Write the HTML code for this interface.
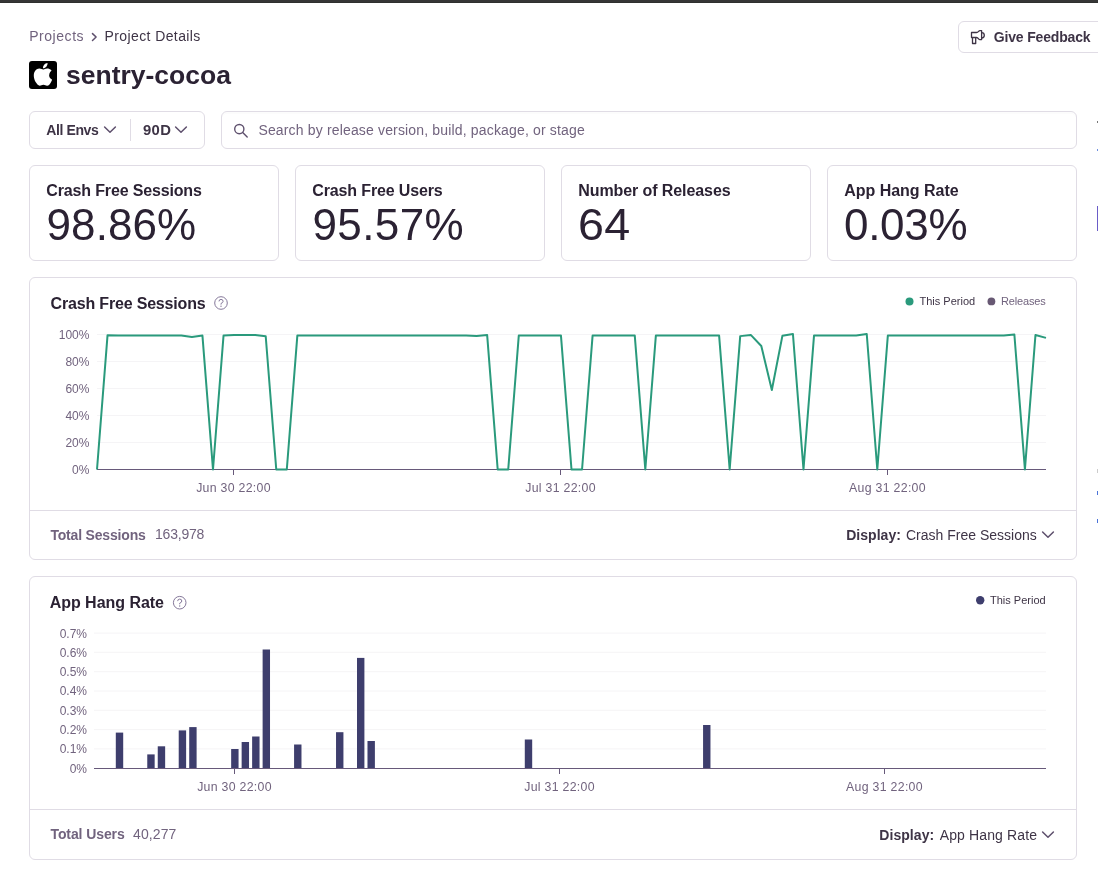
<!DOCTYPE html>
<html><head><meta charset="utf-8"><style>
html,body{margin:0;padding:0;background:#fff;width:1098px;height:880px;overflow:hidden;position:relative;font-family:"Liberation Sans", sans-serif;}
.t{position:absolute;white-space:nowrap;font-family:"Liberation Sans", sans-serif;-webkit-font-smoothing:antialiased;}
body{will-change:transform;}
.b{position:absolute;box-sizing:border-box;}
svg{position:absolute;left:0;top:0;overflow:visible}
</style></head><body>
<div class="b" style="left:0px;top:0px;width:1098px;height:2px;background:#363636;"></div>
<div class="b" style="left:0px;top:2px;width:1098px;height:1px;background:#2f302f;"></div>
<div class="t" style="left:29.20px;top:29.15px;font-size:14px;line-height:14px;color:#71637e;font-weight:400;letter-spacing:0.55px;">Projects</div>
<svg width="1098" height="880" style="pointer-events:none"><path d="M92.5 33.6 L96.1 37.05 L92.5 40.5" fill="none" stroke="#5e506d" stroke-width="1.5" stroke-linecap="round" stroke-linejoin="round"/></svg>
<div class="t" style="left:104.60px;top:29.15px;font-size:14px;line-height:14px;color:#3e3446;font-weight:400;letter-spacing:0.39px;">Project Details</div>
<div class="b" style="left:29px;top:61px;width:28px;height:28px;background:#000;border-radius:3px;"></div>
<svg width="1098" height="880"><g transform="translate(25.13,58.21) scale(0.03054)">
<path fill="#fff" d="M788 553c-1-94 77-139 80-141-44-64-112-73-136-74-58-6-113 34-142 34-29 0-74-33-122-32-63 1-121 37-153 93-65 113-17 281 47 373 31 45 68 96 116 94 47-2 64-30 121-30 56 0 72 30 121 29 50-1 82-46 112-91 35-52 50-102 51-105-1 0-97-37-98-150zM695 277c26-31 43-74 38-117-37 2-82 25-108 55-24 27-45 71-39 113 41 3 83-21 109-51z"/>
</g></svg>
<div class="t" style="left:66.00px;top:61.57px;font-size:26.5px;line-height:26.5px;color:#2b2233;font-weight:700;letter-spacing:0px;">sentry-cocoa</div>
<div class="b" style="left:958px;top:21px;width:160px;height:32px;border:1px solid #e0dce5;border-radius:6px;"></div>
<svg width="1098" height="880"><g fill="none" stroke="#3e3446" stroke-width="1.3" stroke-linejoin="round">
<path d="M971.5 32.5 H976.5 Q977.6 32.5 978.6 31.3 Q979.2 30.6 980 30.6 H981.6 V39.6 H980 Q979.2 39.6 978.6 38.8 Q977.6 37.5 976.5 37.5 H971.5 Z"/>
<path d="M981.6 32.6 A2.7 2.7 0 0 1 981.6 38"/>
<path d="M972.5 37.5 V43.5 H975.7 V37.5"/>
</g></svg>
<div class="t" style="left:993.80px;top:30.25px;font-size:14px;line-height:14px;color:#3e3446;font-weight:700;letter-spacing:-0.17px;">Give Feedback</div>
<div class="b" style="left:29px;top:111px;width:176px;height:38px;border:1px solid #e0dce5;border-radius:6px;"></div>
<div class="b" style="left:130px;top:119px;width:1px;height:22px;background:#e0dce5;"></div>
<div class="t" style="left:46.30px;top:123.15px;font-size:14px;line-height:14px;color:#3e3446;font-weight:700;letter-spacing:-0.4px;">All Envs</div>
<div class="t" style="left:143.00px;top:123.15px;font-size:14px;line-height:14px;color:#3e3446;font-weight:700;letter-spacing:0.3px;transform:scaleX(1.06);transform-origin:0 0;">90D</div>
<svg width="1098" height="880"><g fill="none" stroke="#5e506d" stroke-width="1.5" stroke-linecap="round" stroke-linejoin="round">
<path d="M104.6 127 L110 132.3 L115.4 127"/>
<path d="M175.6 127 L181 132.3 L186.4 127"/>
</g></svg>
<div class="b" style="left:221px;top:111px;width:856px;height:38px;border:1px solid #e0dce5;border-radius:6px;box-shadow:inset 0 2px 0 rgba(0,0,0,0.012);"></div>
<svg width="1098" height="880"><g fill="none" stroke="#5e506d" stroke-width="1.4" stroke-linecap="round">
<circle cx="239.3" cy="129.1" r="4.6"/><path d="M242.7 132.5 L247.2 137"/>
</g></svg>
<div class="t" style="left:258.40px;top:123.15px;font-size:14px;line-height:14px;color:#71637e;font-weight:400;letter-spacing:0.16px;">Search by release version, build, package, or stage</div>
<div class="b" style="left:29px;top:165px;width:250px;height:96px;border:1px solid #e0dce5;border-radius:6px;"></div>
<div class="t" style="left:46.30px;top:183.16px;font-size:16px;line-height:16px;color:#2b2233;font-weight:700;letter-spacing:-0.15px;">Crash Free Sessions</div>
<div class="t" style="left:46.50px;top:202.55px;font-size:44px;line-height:44px;color:#2b2233;font-weight:400;letter-spacing:0.1px;">98.86%</div>
<div class="b" style="left:295px;top:165px;width:250px;height:96px;border:1px solid #e0dce5;border-radius:6px;"></div>
<div class="t" style="left:312.30px;top:183.16px;font-size:16px;line-height:16px;color:#2b2233;font-weight:700;letter-spacing:-0.14px;">Crash Free Users</div>
<div class="t" style="left:312.50px;top:202.55px;font-size:44px;line-height:44px;color:#2b2233;font-weight:400;letter-spacing:0.4px;">95.57%</div>
<div class="b" style="left:561px;top:165px;width:250px;height:96px;border:1px solid #e0dce5;border-radius:6px;"></div>
<div class="t" style="left:578.30px;top:183.16px;font-size:16px;line-height:16px;color:#2b2233;font-weight:700;letter-spacing:-0.09px;">Number of Releases</div>
<div class="t" style="left:577.70px;top:202.55px;font-size:44px;line-height:44px;color:#2b2233;font-weight:400;letter-spacing:0.4px;transform:scaleX(1.06);transform-origin:0 0;">64</div>
<div class="b" style="left:827px;top:165px;width:250px;height:96px;border:1px solid #e0dce5;border-radius:6px;"></div>
<div class="t" style="left:844.30px;top:183.16px;font-size:16px;line-height:16px;color:#2b2233;font-weight:700;letter-spacing:-0.03px;">App Hang Rate</div>
<div class="t" style="left:844.00px;top:202.55px;font-size:44px;line-height:44px;color:#2b2233;font-weight:400;letter-spacing:-0.3px;">0.03%</div>
<div class="b" style="left:29px;top:277px;width:1048px;height:283px;border:1px solid #e0dce5;border-radius:6px;"></div>
<div class="b" style="left:30px;top:510px;width:1046px;height:1px;background:#e0dce5;"></div>
<div class="t" style="left:50.60px;top:296.16px;font-size:16px;line-height:16px;color:#2b2233;font-weight:700;letter-spacing:-0.18px;">Crash Free Sessions</div>
<svg width="1098" height="880"><g fill="none" stroke="#85789a" stroke-width="1"><circle cx="221" cy="303" r="6.3"/><path d="M219 301.4 Q219 299.4 221 299.4 Q223.1 299.4 223.1 301.3 Q223.1 302.7 221 303.5 L221 304.6"/></g><circle cx="221" cy="306.3" r="0.7" fill="#85789a"/></svg>
<svg width="1098" height="880"><circle cx="909.5" cy="301.4" r="4" fill="#2a9a7c"/><circle cx="991.4" cy="301.4" r="3.9" fill="#675873"/></svg>
<div class="t" style="left:919.50px;top:296.49px;font-size:11px;line-height:11px;color:#3e3446;font-weight:400;letter-spacing:0px;">This Period</div>
<div class="t" style="left:1001.00px;top:296.49px;font-size:11px;line-height:11px;color:#71637e;font-weight:400;letter-spacing:-0.15px;">Releases</div>
<svg width="1098" height="880"><line x1="97" y1="334.5" x2="1046" y2="334.5" stroke="#f5f4f6" stroke-width="1"/><line x1="97" y1="361.5" x2="1046" y2="361.5" stroke="#f5f4f6" stroke-width="1"/><line x1="97" y1="388.5" x2="1046" y2="388.5" stroke="#f5f4f6" stroke-width="1"/><line x1="97" y1="415.5" x2="1046" y2="415.5" stroke="#f5f4f6" stroke-width="1"/><line x1="97" y1="442.5" x2="1046" y2="442.5" stroke="#f5f4f6" stroke-width="1"/><line x1="97" y1="469.5" x2="1046" y2="469.5" stroke="#67597a" stroke-width="1"/><line x1="233.5" y1="469.5" x2="233.5" y2="475" stroke="#67597a" stroke-width="1"/><line x1="560.5" y1="469.5" x2="560.5" y2="475" stroke="#67597a" stroke-width="1"/><line x1="887.5" y1="469.5" x2="887.5" y2="475" stroke="#67597a" stroke-width="1"/><polyline points="97.00,469.50 107.54,335.18 118.09,335.58 128.63,335.58 139.18,335.58 149.72,335.58 160.27,335.58 170.81,335.58 181.36,335.58 191.90,337.06 202.44,335.58 212.99,469.50 223.53,335.58 234.08,334.90 244.62,334.90 255.17,334.90 265.71,336.25 276.26,469.50 286.80,469.50 297.34,335.58 307.89,335.58 318.43,335.58 328.98,335.58 339.52,335.58 350.07,335.58 360.61,335.58 371.16,335.58 381.70,335.58 392.24,335.58 402.79,335.58 413.33,335.58 423.88,335.58 434.42,335.58 444.97,335.58 455.51,335.58 466.06,335.58 476.60,335.99 487.14,334.90 497.69,469.50 508.23,469.50 518.78,335.58 529.32,335.58 539.87,335.58 550.41,335.58 560.96,335.58 571.50,469.50 582.04,469.50 592.59,335.58 603.13,335.58 613.68,335.58 624.22,335.58 634.77,335.58 645.31,469.50 655.86,335.58 666.40,335.58 676.94,335.58 687.49,335.58 698.03,335.58 708.58,335.58 719.12,335.58 729.67,469.50 740.21,336.12 750.76,334.90 761.30,345.98 771.84,389.99 782.39,335.85 792.93,333.96 803.48,469.50 814.02,335.58 824.57,335.58 835.11,335.58 845.66,335.58 856.20,335.58 866.74,333.96 877.29,469.50 887.83,335.58 898.38,335.58 908.92,335.58 919.47,335.58 930.01,335.58 940.56,335.58 951.10,335.58 961.64,335.58 972.19,335.58 982.73,335.58 993.28,335.58 1003.82,335.58 1014.37,334.50 1024.91,469.50 1035.46,335.04 1046.00,337.88" fill="none" stroke="#2a9a7c" stroke-width="2" stroke-linejoin="round"/></svg>
<div class="t" style="right:1008.60px;top:328.84px;font-size:12px;line-height:12px;color:#71637e;font-weight:400;letter-spacing:0px;text-align:right;">100%</div>
<div class="t" style="right:1008.60px;top:355.84px;font-size:12px;line-height:12px;color:#71637e;font-weight:400;letter-spacing:0px;text-align:right;">80%</div>
<div class="t" style="right:1008.60px;top:382.84px;font-size:12px;line-height:12px;color:#71637e;font-weight:400;letter-spacing:0px;text-align:right;">60%</div>
<div class="t" style="right:1008.60px;top:409.84px;font-size:12px;line-height:12px;color:#71637e;font-weight:400;letter-spacing:0px;text-align:right;">40%</div>
<div class="t" style="right:1008.60px;top:436.84px;font-size:12px;line-height:12px;color:#71637e;font-weight:400;letter-spacing:0px;text-align:right;">20%</div>
<div class="t" style="right:1008.60px;top:463.84px;font-size:12px;line-height:12px;color:#71637e;font-weight:400;letter-spacing:0px;text-align:right;">0%</div>
<div class="t" style="left:133.50px;width:200px;text-align:center;top:482.29px;font-size:12.3px;line-height:12.3px;color:#71637e;font-weight:400;letter-spacing:0.3px;">Jun 30 22:00</div>
<div class="t" style="left:460.50px;width:200px;text-align:center;top:482.29px;font-size:12.3px;line-height:12.3px;color:#71637e;font-weight:400;letter-spacing:0.3px;">Jul 31 22:00</div>
<div class="t" style="left:787.50px;width:200px;text-align:center;top:482.29px;font-size:12.3px;line-height:12.3px;color:#71637e;font-weight:400;letter-spacing:0.3px;">Aug 31 22:00</div>
<div class="t" style="left:50.40px;top:527.85px;font-size:14px;line-height:14px;color:#71637e;font-weight:700;letter-spacing:-0.18px;">Total Sessions</div>
<div class="t" style="left:155.00px;top:527.15px;font-size:14px;line-height:14px;color:#71637e;font-weight:400;letter-spacing:-0.2px;">163,978</div>
<div class="t" style="right:197.00px;top:527.85px;font-size:14px;line-height:14px;color:#3e3446;font-weight:700;letter-spacing:0.05px;text-align:right;">Display:</div>
<div class="t" style="left:906.00px;top:527.85px;font-size:14px;line-height:14px;color:#3e3446;font-weight:400;letter-spacing:0px;">Crash Free Sessions</div>
<svg width="1098" height="880"><path d="M1042.6 532 L1048 537.3 L1053.4 532" fill="none" stroke="#5e506d" stroke-width="1.5" stroke-linecap="round" stroke-linejoin="round"/></svg>
<div class="b" style="left:29px;top:576px;width:1048px;height:284px;border:1px solid #e0dce5;border-radius:6px;"></div>
<div class="b" style="left:30px;top:809px;width:1046px;height:1px;background:#e0dce5;"></div>
<div class="t" style="left:49.70px;top:594.96px;font-size:16px;line-height:16px;color:#2b2233;font-weight:700;letter-spacing:-0.03px;">App Hang Rate</div>
<svg width="1098" height="880"><g fill="none" stroke="#85789a" stroke-width="1"><circle cx="179.7" cy="602.7" r="6.3"/><path d="M177.7 601.1 Q177.7 599.1 179.7 599.1 Q181.79999999999998 599.1 181.79999999999998 601.0 Q181.79999999999998 602.4000000000001 179.7 603.2 L179.7 604.3000000000001"/></g><circle cx="179.7" cy="606.0" r="0.7" fill="#85789a"/></svg>
<svg width="1098" height="880"><circle cx="980.2" cy="600.2" r="4.2" fill="#3e3e6d"/></svg>
<div class="t" style="left:990.00px;top:595.49px;font-size:11px;line-height:11px;color:#3e3446;font-weight:400;letter-spacing:0px;">This Period</div>
<svg width="1098" height="880"><line x1="94" y1="633.1" x2="1046" y2="633.1" stroke="#f5f4f6" stroke-width="1"/><line x1="94" y1="652.3" x2="1046" y2="652.3" stroke="#f5f4f6" stroke-width="1"/><line x1="94" y1="671.7" x2="1046" y2="671.7" stroke="#f5f4f6" stroke-width="1"/><line x1="94" y1="691.0" x2="1046" y2="691.0" stroke="#f5f4f6" stroke-width="1"/><line x1="94" y1="710.3" x2="1046" y2="710.3" stroke="#f5f4f6" stroke-width="1"/><line x1="94" y1="729.6" x2="1046" y2="729.6" stroke="#f5f4f6" stroke-width="1"/><line x1="94" y1="748.9" x2="1046" y2="748.9" stroke="#f5f4f6" stroke-width="1"/><rect x="115.80" y="732.6" width="7.4" height="35.9" fill="#3e3e6d"/><rect x="147.26" y="754.4" width="7.4" height="14.1" fill="#3e3e6d"/><rect x="157.75" y="746.3" width="7.4" height="22.2" fill="#3e3e6d"/><rect x="178.72" y="730.4" width="7.4" height="38.1" fill="#3e3e6d"/><rect x="189.21" y="727.1" width="7.4" height="41.4" fill="#3e3e6d"/><rect x="231.16" y="749.0" width="7.4" height="19.5" fill="#3e3e6d"/><rect x="241.64" y="742.0" width="7.4" height="26.5" fill="#3e3e6d"/><rect x="252.13" y="736.5" width="7.4" height="32.0" fill="#3e3e6d"/><rect x="262.62" y="649.5" width="7.4" height="119.0" fill="#3e3e6d"/><rect x="294.08" y="744.5" width="7.4" height="24.0" fill="#3e3e6d"/><rect x="336.03" y="732.2" width="7.4" height="36.3" fill="#3e3e6d"/><rect x="357.00" y="657.9" width="7.4" height="110.6" fill="#3e3e6d"/><rect x="367.49" y="741.0" width="7.4" height="27.5" fill="#3e3e6d"/><rect x="524.79" y="739.5" width="7.4" height="29.0" fill="#3e3e6d"/><rect x="703.07" y="725.0" width="7.4" height="43.5" fill="#3e3e6d"/><line x1="94" y1="768.5" x2="1046" y2="768.5" stroke="#67597a" stroke-width="1"/><line x1="234.5" y1="768.5" x2="234.5" y2="774" stroke="#67597a" stroke-width="1"/><line x1="559.5" y1="768.5" x2="559.5" y2="774" stroke="#67597a" stroke-width="1"/><line x1="884.5" y1="768.5" x2="884.5" y2="774" stroke="#67597a" stroke-width="1"/></svg>
<div class="t" style="right:1011.00px;top:627.54px;font-size:12px;line-height:12px;color:#71637e;font-weight:400;letter-spacing:0px;text-align:right;">0.7%</div>
<div class="t" style="right:1011.00px;top:646.83px;font-size:12px;line-height:12px;color:#71637e;font-weight:400;letter-spacing:0px;text-align:right;">0.6%</div>
<div class="t" style="right:1011.00px;top:666.11px;font-size:12px;line-height:12px;color:#71637e;font-weight:400;letter-spacing:0px;text-align:right;">0.5%</div>
<div class="t" style="right:1011.00px;top:685.40px;font-size:12px;line-height:12px;color:#71637e;font-weight:400;letter-spacing:0px;text-align:right;">0.4%</div>
<div class="t" style="right:1011.00px;top:704.68px;font-size:12px;line-height:12px;color:#71637e;font-weight:400;letter-spacing:0px;text-align:right;">0.3%</div>
<div class="t" style="right:1011.00px;top:723.97px;font-size:12px;line-height:12px;color:#71637e;font-weight:400;letter-spacing:0px;text-align:right;">0.2%</div>
<div class="t" style="right:1011.00px;top:743.26px;font-size:12px;line-height:12px;color:#71637e;font-weight:400;letter-spacing:0px;text-align:right;">0.1%</div>
<div class="t" style="right:1011.00px;top:762.54px;font-size:12px;line-height:12px;color:#71637e;font-weight:400;letter-spacing:0px;text-align:right;">0%</div>
<div class="t" style="left:134.50px;width:200px;text-align:center;top:780.59px;font-size:12.3px;line-height:12.3px;color:#71637e;font-weight:400;letter-spacing:0.3px;">Jun 30 22:00</div>
<div class="t" style="left:459.50px;width:200px;text-align:center;top:780.59px;font-size:12.3px;line-height:12.3px;color:#71637e;font-weight:400;letter-spacing:0.3px;">Jul 31 22:00</div>
<div class="t" style="left:784.50px;width:200px;text-align:center;top:780.59px;font-size:12.3px;line-height:12.3px;color:#71637e;font-weight:400;letter-spacing:0.3px;">Aug 31 22:00</div>
<div class="t" style="left:50.50px;top:827.35px;font-size:14px;line-height:14px;color:#71637e;font-weight:700;letter-spacing:-0.1px;">Total Users</div>
<div class="t" style="left:133.00px;top:827.35px;font-size:14px;line-height:14px;color:#71637e;font-weight:400;letter-spacing:0.1px;">40,277</div>
<div class="t" style="right:163.80px;top:827.85px;font-size:14px;line-height:14px;color:#3e3446;font-weight:700;letter-spacing:0.05px;text-align:right;">Display:</div>
<div class="t" style="left:939.70px;top:827.85px;font-size:14px;line-height:14px;color:#3e3446;font-weight:400;letter-spacing:0.13px;">App Hang Rate</div>
<svg width="1098" height="880"><path d="M1042.6 832 L1048 837.3 L1053.4 832" fill="none" stroke="#5e506d" stroke-width="1.5" stroke-linecap="round" stroke-linejoin="round"/></svg>
<div class="b" style="left:1097px;top:121px;width:1px;height:2px;background:#777;"></div>
<div class="b" style="left:1097px;top:149px;width:1px;height:2px;background:#6d8fe0;"></div>
<div class="b" style="left:1097px;top:206px;width:1px;height:25px;background:#6a5cc8;"></div>
<div class="b" style="left:1097px;top:469px;width:1px;height:4px;background:#ccc;"></div>
<div class="b" style="left:1097px;top:491px;width:1px;height:4px;background:#4a73d9;"></div>
<div class="b" style="left:1097px;top:519px;width:1px;height:4px;background:#4a73d9;"></div>
</body></html>
